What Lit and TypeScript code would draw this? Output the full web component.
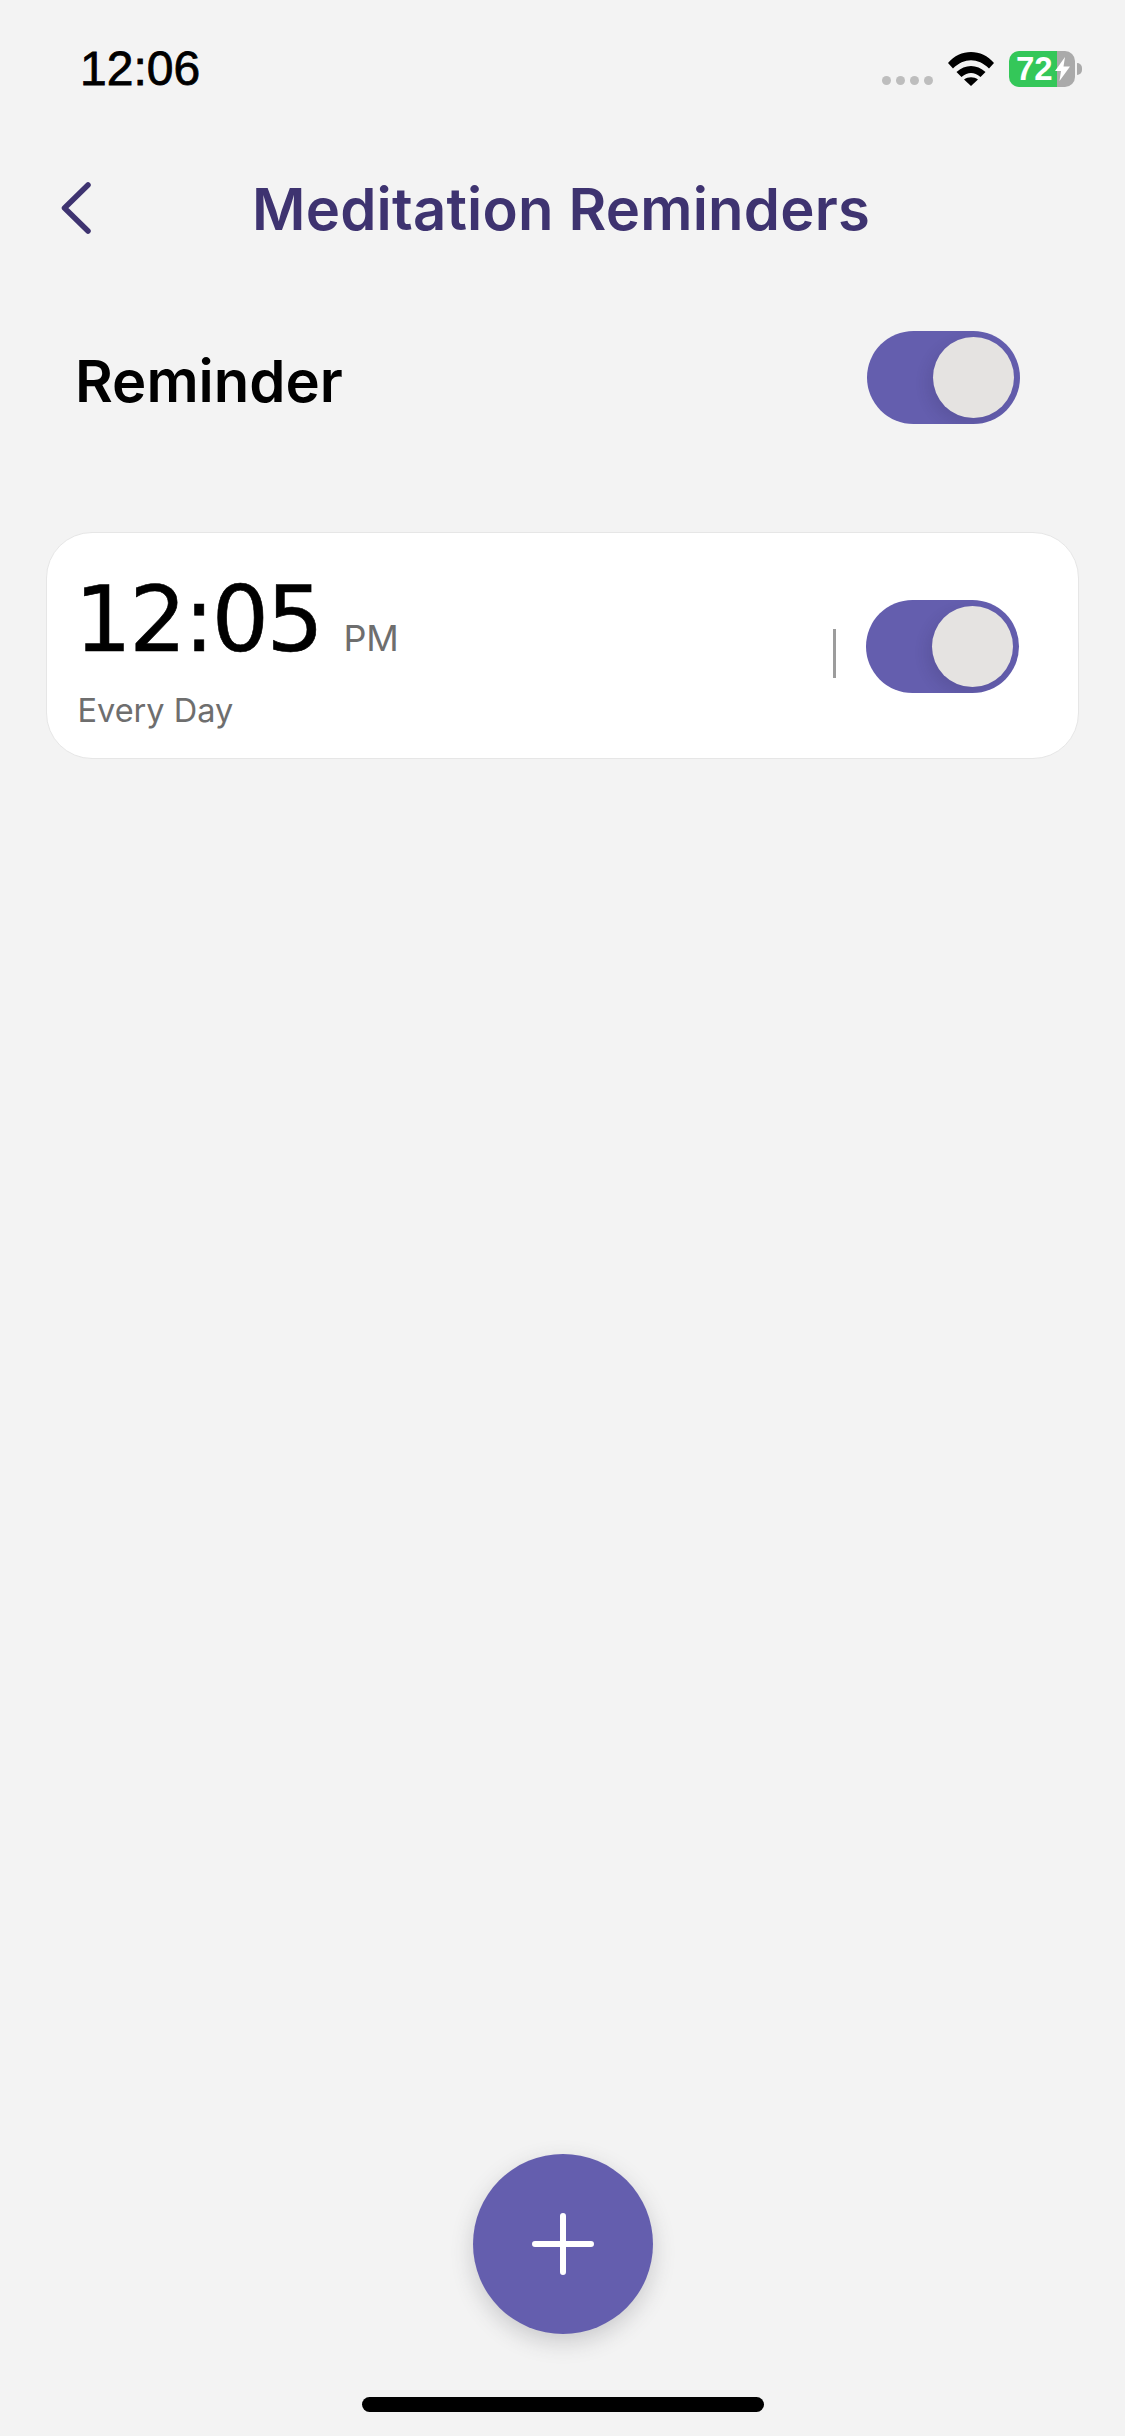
import { LitElement, html, css } from "lit";
import { customElement } from "lit/decorators.js";

@customElement("toggle-switch")
class ToggleSwitch extends LitElement {
  static styles = css`
    :host { display: block; }
    .track {
      width: 153px; height: 93px; box-sizing: border-box; padding: 6px;
      border-radius: 47px; background: #645eae; display: flex; justify-content: flex-end;
      overflow: hidden;
    }
    .knob {
      width: 81px; height: 81px; border-radius: 50%; background: #e5e3e1;
      box-shadow: -5px 6px 14px rgba(40, 35, 70, 0.14);
    }
  `;
  render() {
    return html`<div class="track"><div class="knob"></div></div>`;
  }
}

@customElement("app-root")
class AppRoot extends LitElement {
  static styles = css`
    :host { display: block; }
    .page {
      width: 1125px; height: 2436px; background: #f3f3f3; display: flex; flex-direction: column;
      font-family: Inter, "Liberation Sans", sans-serif; overflow: hidden;
    }
    .status { height: 137px; flex: none; display: flex; align-items: center; padding: 0 43px 0 80px; box-sizing: border-box; }
    .clock { font: 48px/1 "Liberation Sans", Arial, sans-serif; color: #000; -webkit-text-stroke: 0.8px #000; }
    .status-right { margin-left: auto; display: flex; align-items: center; }
    .dots { display: flex; gap: 5px; margin: 24px 15px 0 0; }
    .dots i { width: 9px; height: 9px; border-radius: 50%; background: #bdbdbd; display: block; }
    .wifi { width: 46px; height: 34px; display: block; margin-right: 15px; }
    .battery {
      width: 66px; height: 36px; border-radius: 10px; box-sizing: border-box; padding-left: 7px;
      background: linear-gradient(90deg, #34c759 48px, #aaaaaa 48px);
      display: flex; align-items: center; gap: 2px;
      color: #fff; font: bold 33px/36px "Liberation Sans", Arial, sans-serif;
    }
    .bolt { width: 15px; height: 24px; display: block; }
    .nub { width: 5px; height: 12px; margin-left: 2px; background: #aaaaaa; border-radius: 0 5px 5px 0; }
    .header { height: 141px; flex: none; display: flex; align-items: center; padding-left: 61px; box-sizing: border-box; }
    .back { width: 30px; height: 52px; display: block; flex: none; }
    .title {
      margin: 2px 0 0 161px; font-size: 58px; line-height: 1; font-weight: 600; color: #3e3370; white-space: nowrap; letter-spacing: 0.2px;
    }
    .reminder { height: 199px; flex: none; display: flex; align-items: center; justify-content: space-between; padding: 0 105px 0 75px; box-sizing: border-box; }
    .reminder h2 { margin: 6px 0 0; font-size: 58px; line-height: 1; font-weight: 600; color: #000; }
    .card {
      margin: 55px 46px 0 45.5px; height: 227px; box-sizing: border-box; flex: none;
      background: #fff; border: 1.5px solid #e6e6e6; border-radius: 46px;
      display: flex; align-items: center; justify-content: space-between; padding: 0 59.5px 0 31px;
    }
    .text { padding-top: 14px; }
    .time-row { display: flex; align-items: baseline; gap: 22px; }
    .time { font-family: "DejaVu Sans", sans-serif; font-size: 90px; line-height: 90px; color: #000; letter-spacing: -2.5px; margin-left: -3px; -webkit-text-stroke: 0.6px #000; }
    .ampm { font-size: 36px; line-height: 1; color: #6e6e6e; }
    .repeat { font-size: 32.5px; line-height: 40px; color: #6e6e6e; margin-top: 26px; }
    .controls { display: flex; align-items: center; gap: 30px; padding-top: 2px; }
    .divider { width: 3px; height: 49px; background: #9c9c9c; margin-top: 14px; }
    .fab {
      margin: auto auto 0; width: 180px; height: 180px; border-radius: 50%; background: #645eae; flex: none;
      display: flex; align-items: center; justify-content: center;
      box-shadow: 0 8px 22px rgba(60, 60, 70, 0.22);
    }
    .plus { width: 62px; height: 62px; display: block; }
    .home { margin: 63px auto 24px; width: 402px; height: 15px; border-radius: 8px; background: #000; flex: none; }
  `;

  render() {
    return html`
      <div class="page">
        <div class="status">
          <span class="clock">12:06</span>
          <div class="status-right">
            <div class="dots"><i></i><i></i><i></i><i></i></div>
            <svg class="wifi" viewBox="0 0 46 34">
              <path fill="#000" d="M0 11C12-3.6 34-3.6 46 11L41 16.5C30 5.5 16 5.5 5 16.5Z"/>
              <path fill="#000" d="M8.5 20C17 12 29 12 37.5 20L32.5 25C26 19.5 20 19.5 13.5 25Z"/>
              <path fill="#000" d="M16 27.5C20 24.5 26 24.5 30 27.5L23 34Z"/>
            </svg>
            <div class="battery">
              <span>72</span>
              <svg class="bolt" viewBox="0 0 15 24"><path fill="#fff" d="M10 0L0 14H6L4.500 24L15 9.500H8.500Z"/></svg>
            </div>
            <div class="nub"></div>
          </div>
        </div>
        <div class="header">
          <svg class="back" viewBox="0 0 30 52">
            <path fill="none" stroke="#3e3370" stroke-width="5.500" stroke-linecap="round" stroke-linejoin="round" d="M27 3L3.500 26L27 49"/>
          </svg>
          <h1 class="title">Meditation Reminders</h1>
        </div>
        <div class="reminder">
          <h2>Reminder</h2>
          <toggle-switch></toggle-switch>
        </div>
        <div class="card">
          <div class="text">
            <div class="time-row"><span class="time">12:05</span><span class="ampm">PM</span></div>
            <div class="repeat">Every Day</div>
          </div>
          <div class="controls">
            <div class="divider"></div>
            <toggle-switch></toggle-switch>
          </div>
        </div>
        <div class="fab">
          <svg class="plus" viewBox="0 0 62 62">
            <path fill="none" stroke="#fff" stroke-width="6" stroke-linecap="round" d="M31 3V59M3 31H59"/>
          </svg>
        </div>
        <div class="home"></div>
      </div>
    `;
  }
}
